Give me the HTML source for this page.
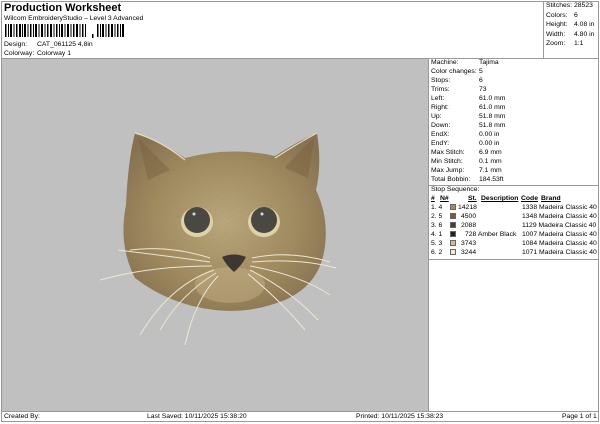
<!DOCTYPE html>
<html><head><style>
*{margin:0;padding:0;box-sizing:border-box}
body{width:600px;height:424px;background:#fff;font-family:"Liberation Sans",Arial,sans-serif;font-size:6.8px;color:#000;position:relative;overflow:hidden}
.a{position:absolute;white-space:nowrap;line-height:9px}
.b{position:absolute;background:#999}
.sw{display:inline-block;width:6px;height:6px;border:0.5px solid #666;vertical-align:-1px}
u{text-decoration:underline;font-weight:bold}
</style></head><body>
<div class="b" style="left:1px;top:1px;width:598px;height:1px"></div>
<div class="b" style="left:1px;top:1px;width:1px;height:421px"></div>
<div class="b" style="left:598px;top:1px;width:1px;height:421px"></div>
<div class="b" style="left:1px;top:421px;width:598px;height:1px"></div>
<div class="b" style="left:543px;top:1px;width:1px;height:58px"></div>
<div class="b" style="left:1px;top:58px;width:598px;height:1px"></div>
<div class="b" style="left:1px;top:411px;width:598px;height:1px"></div>
<div style="position:absolute;left:2px;top:59px;width:426px;height:352px;background:#c0c0c0"></div>
<div class="b" style="left:428px;top:59px;width:1px;height:352px"></div>
<div class="b" style="left:429px;top:185px;width:169px;height:1px"></div>
<div class="b" style="left:429px;top:259px;width:169px;height:1px"></div>

<div class="a" style="left:4px;top:2px;font-size:11px;font-weight:bold;line-height:13px">Production Worksheet</div>
<div class="a" style="left:4px;top:14px">Wilcom EmbroideryStudio – Level 3 Advanced</div>
<svg style="position:absolute;left:5px;top:24px" width="125" height="14">
<g fill="#000">
<rect x="0" y="0" width="1.5" height="13"/><rect x="3" y="0" width="1" height="13"/><rect x="5" y="0" width="2" height="13"/><rect x="8.5" y="0" width="1" height="13"/><rect x="11" y="0" width="1.5" height="13"/><rect x="14" y="0" width="2" height="13"/><rect x="17" y="0" width="1" height="13"/><rect x="19" y="0" width="2" height="13"/><rect x="22.5" y="0" width="1" height="13"/><rect x="25" y="0" width="1.5" height="13"/><rect x="28" y="0" width="1" height="13"/><rect x="30" y="0" width="2" height="13"/><rect x="33.5" y="0" width="1" height="13"/><rect x="36" y="0" width="2" height="13"/><rect x="39.5" y="0" width="1" height="13"/><rect x="42" y="0" width="1.5" height="13"/><rect x="45" y="0" width="2" height="13"/><rect x="48.5" y="0" width="1" height="13"/><rect x="51" y="0" width="1.5" height="13"/><rect x="54" y="0" width="1" height="13"/><rect x="56" y="0" width="2" height="13"/><rect x="59.5" y="0" width="1" height="13"/><rect x="62" y="0" width="2" height="13"/><rect x="65.5" y="0" width="1" height="13"/><rect x="68" y="0" width="1.5" height="13"/><rect x="71" y="0" width="2" height="13"/><rect x="74.5" y="0" width="1" height="13"/><rect x="77" y="0" width="1.5" height="13"/><rect x="80" y="0" width="1" height="13"/>
<rect x="87" y="10" width="1.5" height="4"/>
<rect x="92" y="0" width="1.5" height="13"/><rect x="95" y="0" width="1" height="13"/><rect x="97" y="0" width="2" height="13"/><rect x="100.5" y="0" width="1" height="13"/><rect x="103" y="0" width="1.5" height="13"/><rect x="106" y="0" width="2" height="13"/><rect x="109.5" y="0" width="1" height="13"/><rect x="112" y="0" width="1.5" height="13"/><rect x="115" y="0" width="1" height="13"/><rect x="117" y="0" width="2" height="13"/>
</g></svg>
<div class="a" style="left:4px;top:40px">Design:</div><div class="a" style="left:37px;top:40px">CAT_061125 4,8in</div>
<div class="a" style="left:4px;top:49px">Colorway:</div><div class="a" style="left:37px;top:49px">Colorway 1</div>

<div class="a" style="left:546px;top:1px">Stitches:</div><div class="a" style="left:574px;top:1px">28523</div>
<div class="a" style="left:546px;top:10.5px">Colors:</div><div class="a" style="left:574px;top:10.5px">6</div>
<div class="a" style="left:546px;top:20px">Height:</div><div class="a" style="left:574px;top:20px">4.08 in</div>
<div class="a" style="left:546px;top:29.5px">Width:</div><div class="a" style="left:574px;top:29.5px">4.80 in</div>
<div class="a" style="left:546px;top:39px">Zoom:</div><div class="a" style="left:574px;top:39px">1:1</div>

<div style="position:absolute;left:431px;top:58px">
<div class="a" style="top:0">Machine:</div><div class="a" style="left:48px;top:0">Tajima</div>
<div class="a" style="top:9px">Color changes:</div><div class="a" style="left:48px;top:9px">5</div>
<div class="a" style="top:18px">Stops:</div><div class="a" style="left:48px;top:18px">6</div>
<div class="a" style="top:27px">Trims:</div><div class="a" style="left:48px;top:27px">73</div>
<div class="a" style="top:36px">Left:</div><div class="a" style="left:48px;top:36px">61.0 mm</div>
<div class="a" style="top:45px">Right:</div><div class="a" style="left:48px;top:45px">61.0 mm</div>
<div class="a" style="top:54px">Up:</div><div class="a" style="left:48px;top:54px">51.8 mm</div>
<div class="a" style="top:63px">Down:</div><div class="a" style="left:48px;top:63px">51.8 mm</div>
<div class="a" style="top:72px">EndX:</div><div class="a" style="left:48px;top:72px">0.00 in</div>
<div class="a" style="top:81px">EndY:</div><div class="a" style="left:48px;top:81px">0.00 in</div>
<div class="a" style="top:90px">Max Stitch:</div><div class="a" style="left:48px;top:90px">6.9 mm</div>
<div class="a" style="top:99px">Min Stitch:</div><div class="a" style="left:48px;top:99px">0.1 mm</div>
<div class="a" style="top:108px">Max Jump:</div><div class="a" style="left:48px;top:108px">7.1 mm</div>
<div class="a" style="top:117px">Total Bobbin:</div><div class="a" style="left:48px;top:117px">184.53ft</div>
<div class="a" style="top:127px">Stop Sequence:</div>
<div class="a" style="top:136px"><u>#</u></div><div class="a" style="left:9px;top:136px"><u>N#</u></div>
<div class="a" style="left:37px;top:136px"><u>St.</u></div><div class="a" style="left:50px;top:136px"><u>Description</u></div>
<div class="a" style="left:90px;top:136px"><u>Code</u></div><div class="a" style="left:110px;top:136px"><u>Brand</u></div>
</div>
<div style="position:absolute;left:431px;top:203px">
<div class="a" style="top:0">1. 4</div><div class="a" style="left:19px;top:0"><span class="sw" style="background:#a88a5c"></span></div><div class="a" style="left:27px;top:0">14218</div><div class="a" style="left:91px;top:0">1338 Madeira Classic 40</div>
<div class="a" style="top:9px">2. 5</div><div class="a" style="left:19px;top:9px"><span class="sw" style="background:#7a5a34"></span></div><div class="a" style="left:30px;top:9px">4500</div><div class="a" style="left:91px;top:9px">1348 Madeira Classic 40</div>
<div class="a" style="top:18px">3. 6</div><div class="a" style="left:19px;top:18px"><span class="sw" style="background:#4a3a30"></span></div><div class="a" style="left:30px;top:18px">2088</div><div class="a" style="left:91px;top:18px">1129 Madeira Classic 40</div>
<div class="a" style="top:27px">4. 1</div><div class="a" style="left:19px;top:27px"><span class="sw" style="background:#222"></span></div><div class="a" style="left:34px;top:27px">728 Amber Black</div><div class="a" style="left:91px;top:27px">1007 Madeira Classic 40</div>
<div class="a" style="top:36px">5. 3</div><div class="a" style="left:19px;top:36px"><span class="sw" style="background:#d8b898"></span></div><div class="a" style="left:30px;top:36px">3743</div><div class="a" style="left:91px;top:36px">1084 Madeira Classic 40</div>
<div class="a" style="top:45px">6. 2</div><div class="a" style="left:19px;top:45px"><span class="sw" style="background:#eeeadc"></span></div><div class="a" style="left:30px;top:45px">3244</div><div class="a" style="left:91px;top:45px">1071 Madeira Classic 40</div>
</div>

<svg style="position:absolute;left:0;top:0" width="600" height="424">
<defs>
<radialGradient id="g" cx="0.5" cy="0.5" r="0.6">
<stop offset="0" stop-color="#bba87c"/><stop offset="0.6" stop-color="#a08a5e"/><stop offset="1" stop-color="#857050"/>
</radialGradient>
<filter id="n"><feTurbulence type="fractalNoise" baseFrequency="0.6" numOctaves="2" result="t"/><feColorMatrix in="t" type="matrix" values="0 0 0 0 0.3  0 0 0 0 0.25  0 0 0 0 0.15  0 0 0 1.2 -0.5"/><feComposite in2="SourceGraphic" operator="in"/></filter>
</defs>
<g id="head">
<path d="M135,133 Q155,138 185,158 Q230,146 275,156 Q300,140 317,133 Q322,165 316,190 Q330,220 324,252 Q318,285 285,300 Q250,314 215,310 Q170,305 135,278 Q118,245 126,205 Q128,160 135,133 Z" fill="url(#g)"/>
</g>
<path d="M135,133 Q155,138 185,158 Q230,146 275,156 Q300,140 317,133 Q322,165 316,190 Q330,220 324,252 Q318,285 285,300 Q250,314 215,310 Q170,305 135,278 Q118,245 126,205 Q128,160 135,133 Z" fill="#000" filter="url(#n)" opacity="0.5"/>
<path d="M138,138 Q150,150 170,170 L148,180 Z" fill="#7a6240" opacity="0.5"/>
<path d="M314,138 Q300,150 285,168 L308,178 Z" fill="#7a6240" opacity="0.5"/>
<path d="M135,133 Q160,140 185,160" stroke="#e4dcc0" stroke-width="1.2" fill="none"/>
<path d="M317,133 Q295,145 275,158" stroke="#e4dcc0" stroke-width="1.2" fill="none"/>
<ellipse cx="230" cy="285" rx="35" ry="18" fill="#c4b088" opacity="0.5"/>
<ellipse cx="197" cy="222" rx="16" ry="15" fill="#e0d2a8"/>
<ellipse cx="264" cy="222" rx="16" ry="15" fill="#e0d2a8"/>
<circle cx="197" cy="220" r="13" fill="#4a4842"/>
<circle cx="264" cy="220" r="13" fill="#4a4842"/>
<circle cx="194" cy="214" r="1.5" fill="#ddd"/><circle cx="262" cy="214" r="1.5" fill="#ddd"/>
<path d="M222,257 Q234,252 246,257 Q242,265 234,272 Q226,265 222,257Z" fill="#3e3630"/>
<g stroke="#ece6d2" stroke-width="1" fill="none">
<path d="M210,262 Q160,255 118,250"/><path d="M212,266 Q150,266 100,280"/><path d="M214,270 Q170,285 140,335"/><path d="M216,273 Q180,295 160,330"/><path d="M218,276 Q195,300 185,345"/><path d="M210,258 Q170,245 130,250"/>
<path d="M252,262 Q300,258 336,268"/><path d="M250,266 Q300,275 330,295"/><path d="M250,270 Q290,290 318,320"/><path d="M248,274 Q280,300 305,330"/><path d="M252,258 Q290,250 330,262"/>
</g>
</svg>

<div class="a" style="left:4px;top:412px">Created By:</div>
<div class="a" style="left:147px;top:412px">Last Saved: 10/11/2025 15:38:20</div>
<div class="a" style="left:356px;top:412px">Printed: 10/11/2025 15:38:23</div>
<div class="a" style="left:562px;top:412px">Page 1 of 1</div>
</body></html>
